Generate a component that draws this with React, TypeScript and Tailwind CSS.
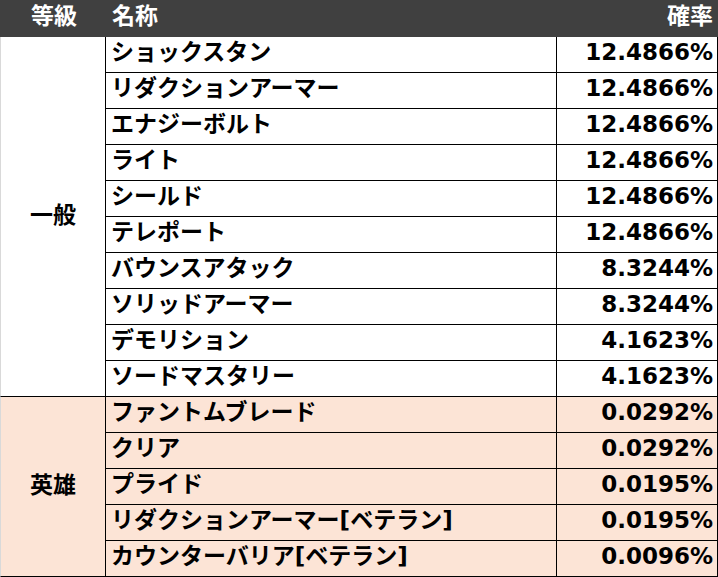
const normal = [
  ["ショックスタン", "12.4866%"],
  ["リダクションアーマー", "12.4866%"],
  ["エナジーボルト", "12.4866%"],
  ["ライト", "12.4866%"],
  ["シールド", "12.4866%"],
  ["テレポート", "12.4866%"],
  ["バウンスアタック", "8.3244%"],
  ["ソリッドアーマー", "8.3244%"],
  ["デモリション", "4.1623%"],
  ["ソードマスタリー", "4.1623%"],
];

const hero = [
  ["ファントムブレード", "0.0292%"],
  ["クリア", "0.0292%"],
  ["プライド", "0.0195%"],
  ["リダクションアーマー[ベテラン]", "0.0195%"],
  ["カウンターバリア[ベテラン]", "0.0096%"],
];

function Group({ label, rows, bg }: { label: string; rows: string[][]; bg: string }) {
  return (
    <div className={`flex ${bg}`}>
      <div className="flex w-[106px] shrink-0 items-center justify-center border-r border-b border-l border-r-black border-b-black border-l-[#d9d9d9] pb-[3px]">
        {label}
      </div>
      <div className="flex flex-1 flex-col">
        {rows.map(([name, rate]) => (
          <div key={name} className="flex h-[36px] border-b border-black">
            <div className="flex w-[451px] shrink-0 items-center border-r border-black pb-[4px] pl-[5px]">{name}</div>
            <div className="flex flex-1 items-center justify-end border-r border-black pr-[4px] pb-[4px]">{rate}</div>
          </div>
        ))}
      </div>
    </div>
  );
}

export default function App() {
  return (
    <div
      className="w-[718px] bg-white text-[23px] font-bold leading-none text-black"
      style={{ fontFamily: '"DejaVu Sans", "Noto Sans CJK JP", sans-serif' }}
    >
      <div className="flex h-[37px] bg-[#404040] pb-[4px] text-white">
        <div className="flex w-[106px] items-center justify-center pl-[2px]">等級</div>
        <div className="flex w-[451px] items-center pl-[6px]">名称</div>
        <div className="flex flex-1 items-center justify-end pr-[5px]">確率</div>
      </div>
      <Group label="一般" rows={normal} bg="bg-white" />
      <Group label="英雄" rows={hero} bg="bg-[#fce4d6]" />
    </div>
  );
}
